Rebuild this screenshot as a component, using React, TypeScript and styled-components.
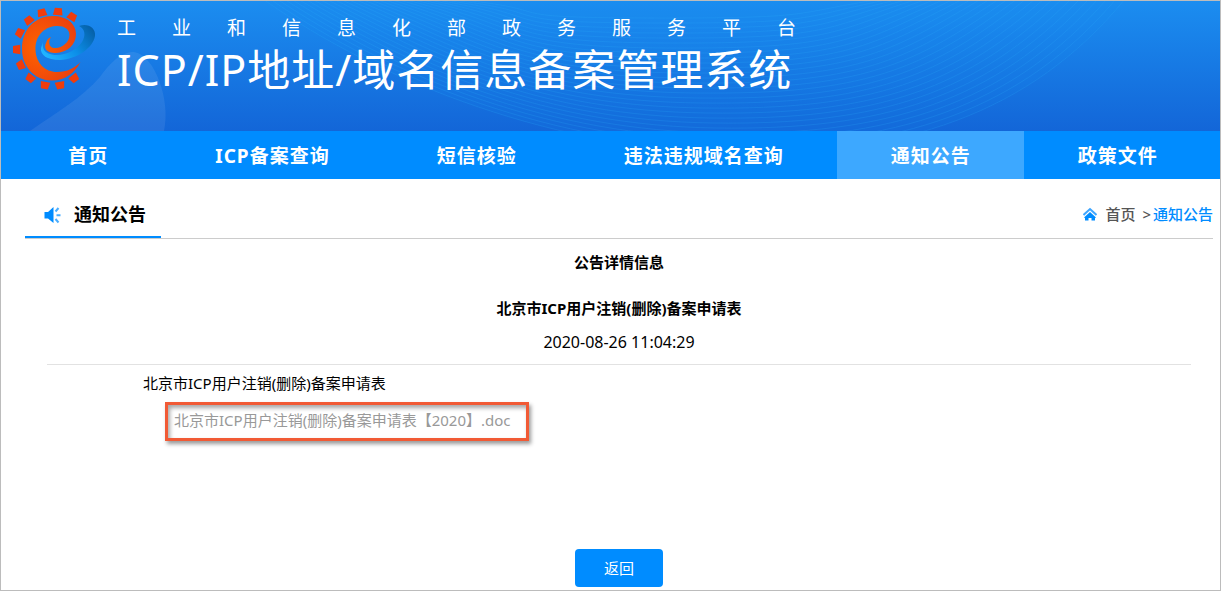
import React from "react";
import styled, { createGlobalStyle } from "styled-components";

const BLUE = "#008cff";

const GlobalStyle = createGlobalStyle`
  *, *::before, *::after { box-sizing: border-box; }
  body {
    margin: 0;
    background: #fff;
    color: #000;
    font-family: "Noto Sans", "Noto Sans CJK SC", sans-serif;
    font-size: 15px;
    line-height: 24px;
  }
  h1, h2, h3, p { margin: 0; }
  a { text-decoration: none; }
`;

const Page = styled.div`
  min-height: 100vh;
  display: flex;
  flex-direction: column;
  border: 1px solid #bcbcbc;
`;

const Banner = styled.header`
  position: relative;
  overflow: hidden;
  display: flex;
  height: 130px;
  padding: 5px 12px;
  background: linear-gradient(#1b8df0, #1366d8);
  color: #fff;
`;

const BannerArt = styled.svg`
  position: absolute;
  top: 0;
  left: 0;
  width: 100%;
  height: 130px;
`;

const Logo = styled.svg`
  position: relative;
  flex: none;
  width: 84px;
  height: 86px;
`;

const Titles = styled.div`
  position: relative;
  display: flex;
  flex-direction: column;
  margin-left: 20px;
  padding-top: 8px;
  white-space: nowrap;
`;

const Ministry = styled.p`
  font-size: 19px;
  line-height: 28px;
  letter-spacing: 36px;
`;

const SystemName = styled.h1`
  font-size: 43px;
  line-height: 56px;
  font-weight: 400;
  letter-spacing: 1px;
`;

const Nav = styled.nav`
  display: flex;
  justify-content: center;
  padding-left: 4px;
  background: ${BLUE};
`;

const NavLink = styled.a<{ $active?: boolean }>`
  padding: 2px 53px 0 54px;
  font-size: 19px;
  line-height: 46px;
  font-weight: 700;
  letter-spacing: 1px;
  white-space: nowrap;
  color: #fff;
  background: ${(p) => (p.$active ? "#3da8ff" : "transparent")};
`;

const Main = styled.main`
  flex: 1;
  display: flex;
  flex-direction: column;
  padding: 12px 7px 3px 24px;
`;

const SectionBar = styled.div`
  display: flex;
  justify-content: space-between;
  border-bottom: 1px solid #ccc;
`;

const SectionTitle = styled.h2`
  display: flex;
  align-items: center;
  gap: 12px;
  height: 47px;
  padding: 0 15px 0 19px;
  border-bottom: 2px solid ${BLUE};
  font-size: 18px;
  font-weight: 700;
`;

const Crumbs = styled.nav`
  display: flex;
  align-items: center;
  height: 46px;
  font-weight: 500;
  color: #555;
`;

const Crumb = styled.a<{ $current?: boolean }>`
  color: ${(p) => (p.$current ? BLUE : "#555")};
`;

const CrumbArrow = styled.span`
  margin: 0 2px 0 7px;
`;

const HomeIcon = styled.svg`
  margin-right: 8px;
`;

const Article = styled.article`
  display: flex;
  flex-direction: column;
  padding: 11px 22px 0;
`;

const ArticleHead = styled.header`
  display: flex;
  flex-direction: column;
  align-items: center;
  padding-bottom: 10px;
  border-bottom: 1px solid #e2e2e2;
`;

const Kicker = styled.h3`
  font-size: 15px;
  font-weight: 700;
  margin-bottom: 22px;
`;

const Headline = styled.h3`
  font-size: 15px;
  font-weight: 700;
  margin-bottom: 10px;
`;

const Published = styled.time`
  font-size: 16px;
`;

const ArticleBody = styled.div`
  display: flex;
  flex-direction: column;
  align-items: flex-start;
  gap: 7px;
  padding: 6px 96px;
`;

const Attachment = styled.a`
  margin-left: 22px;
  padding: 3px 16px 6px 6px;
  border: 3px solid #f15a35;
  color: #999;
  box-shadow: 2px 3px 4px rgba(0, 0, 0, 0.4), inset 2px 3px 4px rgba(0, 0, 0, 0.35);
`;

const BackButton = styled.button`
  align-self: center;
  margin-top: auto;
  width: 88px;
  height: 38px;
  border: 0;
  border-radius: 4px;
  background: ${BLUE};
  color: #fff;
  font: inherit;
`;

const NAV_ITEMS = ["首页", "ICP备案查询", "短信核验", "违法违规域名查询", "通知公告", "政策文件"];

const WAVES = Array.from({ length: 28 }, (_, i) => {
  const left = 262 + i * 7;
  const right = 1124 - i * 9;
  const depth = 152 - i * 5;
  const mid = 730 - i * 3;
  return `M${left} -2 C${left + 120} ${depth * 0.55} ${mid - 170} ${depth * 0.98} ${mid} ${depth} S${right - 95} ${depth * 0.75} ${right} -2`;
});

const TEETH = [
  [42, 13, -14], [58, 12, 5], [72, 17, 32], [29, 20.5, -38], [20, 33, -62], [17, 49.5, -90],
  [21, 65, -116], [30.5, 78, -143], [45, 85, -170], [60, 85, -190], [74, 78, -218],
];

function EmblemLogo() {
  return (
    <Logo viewBox="13 6 84 86" aria-hidden="true">
      <defs>
        <radialGradient id="body" cx="0.3" cy="0.5" r="0.75">
          <stop offset="0" stopColor="#ff6400" />
          <stop offset="1" stopColor="#e83c10" />
        </radialGradient>
        <linearGradient id="swoosh" x1="0" x2="1" y1="0.7" y2="0.2">
          <stop offset="0" stopColor="#20b4ff" />
          <stop offset="0.5" stopColor="#0c8ee8" />
          <stop offset="1" stopColor="#0560a8" />
        </linearGradient>
      </defs>
      <path
        fill="url(#swoosh)"
        d="M43 42 C42 48 44 53 52 54.500 C62 57 76 51 82 42 C86 35 85 29 79 26 C88 23 96 28 95 36 C93 48 77 59 60 60 C47 60 40 55 41 48 Z"
      />
      <path
        fill="url(#body)"
        d="M80.500 62 C74 74 64 81 51 80.500 C34 80 22 66 22 49 C22 29 35 16 53 16 C67 16 76 24 76 34 C76 45 67 52.500 56 53 C48 53.500 43 49 46 43 C47 40 48 38 51 37 C49 40 48 45 52 47.500 C60 50 69.500 43 69.500 35 C69.500 29 64 25.500 56 26 C43 27 35 37 35.500 50 C36 63 45 72 57 72 C67 72 75 68 80.500 62 Z"
      />
      {TEETH.map(([x, y, angle]) => (
        <path
          key={angle}
          fill="#f03c0c"
          transform={`translate(${x} ${y}) rotate(${angle})`}
          d="M-3.500 -4 H3.500 L4.800 3.200 H-4.800 Z"
        />
      ))}
    </Logo>
  );
}

export default function App() {
  return (
    <>
      <GlobalStyle />
      <Page>
        <Banner>
          <BannerArt aria-hidden="true">
            <path d="M29 130 C55 112 82 96 99 76 C112 58 122 51 133 51 C154 54 170 100 163 130 Z" fill="#fff" fillOpacity="0.08" />
            <path d="M262 -2 C382 84 560 149 730 152 S1029 114 1124 -2 Z" fill="#1698f4" fillOpacity="0.1" />
            {WAVES.map((d) => (
              <path key={d} d={d} fill="none" stroke="#2cb0fc" strokeOpacity="0.2" />
            ))}
          </BannerArt>
          <EmblemLogo />
          <Titles>
            <Ministry>工业和信息化部政务服务平台</Ministry>
            <SystemName>ICP/IP地址/域名信息备案管理系统</SystemName>
          </Titles>
        </Banner>
        <Nav>
          {NAV_ITEMS.map((label) => (
            <NavLink key={label} href="#" $active={label === "通知公告"}>
              {label}
            </NavLink>
          ))}
        </Nav>
        <Main>
          <SectionBar>
            <SectionTitle>
              <svg width="18" height="20" viewBox="0 -2 18 20" aria-hidden="true">
                <path d="M0.500 6 H4 L9.500 1 V17 L4 12.500 H0.500 Z" fill={BLUE} />
                <path d="M11.500 5.500 L14.500 2 M12.500 9.200 H16.500 M11.500 13 L14.500 16.500" stroke="#4aaeff" strokeWidth="2" />
              </svg>
              通知公告
            </SectionTitle>
            <Crumbs>
              <HomeIcon width="14" height="14" viewBox="0 0 14 14" aria-hidden="true">
                <path d="M0.500 8 L7 2 L13.500 8" fill="none" stroke="#3fa6ff" strokeWidth="2" />
                <path d="M7 5 L13 10.500 L12 11 V13.500 H8.500 V11 H5.500 V13.500 H2 V11 L1 10.500 Z" fill={BLUE} />
              </HomeIcon>
              <Crumb href="#">首页</Crumb>
              <CrumbArrow>&gt;</CrumbArrow>
              <Crumb href="#" $current>
                通知公告
              </Crumb>
            </Crumbs>
          </SectionBar>
          <Article>
            <ArticleHead>
              <Kicker>公告详情信息</Kicker>
              <Headline>北京市ICP用户注销(删除)备案申请表</Headline>
              <Published dateTime="2020-08-26T11:04:29">2020-08-26 11:04:29</Published>
            </ArticleHead>
            <ArticleBody>
              <p>北京市ICP用户注销(删除)备案申请表</p>
              <Attachment href="#">北京市ICP用户注销(删除)备案申请表【2020】.doc</Attachment>
            </ArticleBody>
          </Article>
          <BackButton type="button">返回</BackButton>
        </Main>
      </Page>
    </>
  );
}
